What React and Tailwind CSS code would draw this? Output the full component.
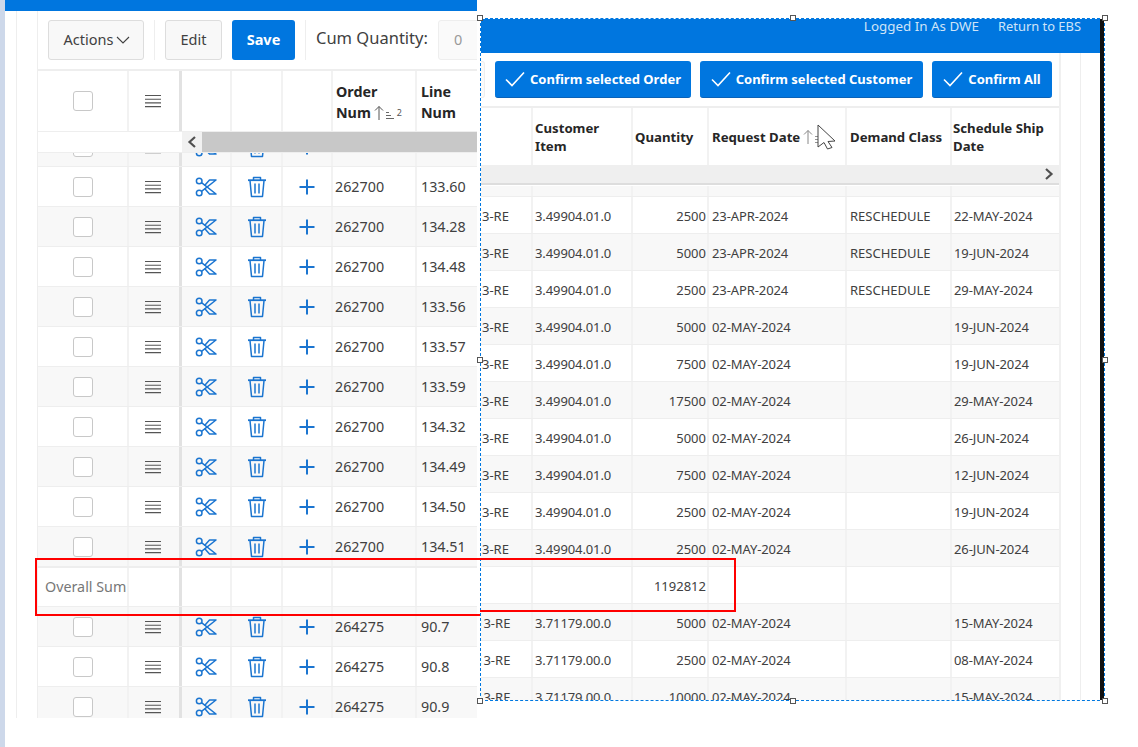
const BLUE = "#1b75d0";

const leftRows = [
  ["", ""],
  ["262700", "133.60"],
  ["262700", "134.28"],
  ["262700", "134.48"],
  ["262700", "133.56"],
  ["262700", "133.57"],
  ["262700", "133.59"],
  ["262700", "134.32"],
  ["262700", "134.49"],
  ["262700", "134.50"],
  ["262700", "134.51"],
  null,
  ["264275", "90.7"],
  ["264275", "90.8"],
  ["264275", "90.9"],
];

const rightRows = [
  { hidden: true },
  { c: "3.49904.01.0", q: "2500", d: "23-APR-2024", k: "RESCHEDULE", s: "22-MAY-2024" },
  { c: "3.49904.01.0", q: "5000", d: "23-APR-2024", k: "RESCHEDULE", s: "19-JUN-2024" },
  { c: "3.49904.01.0", q: "2500", d: "23-APR-2024", k: "RESCHEDULE", s: "29-MAY-2024" },
  { c: "3.49904.01.0", q: "5000", d: "02-MAY-2024", k: "", s: "19-JUN-2024" },
  { c: "3.49904.01.0", q: "7500", d: "02-MAY-2024", k: "", s: "19-JUN-2024" },
  { c: "3.49904.01.0", q: "17500", d: "02-MAY-2024", k: "", s: "29-MAY-2024" },
  { c: "3.49904.01.0", q: "5000", d: "02-MAY-2024", k: "", s: "26-JUN-2024" },
  { c: "3.49904.01.0", q: "7500", d: "02-MAY-2024", k: "", s: "12-JUN-2024" },
  { c: "3.49904.01.0", q: "2500", d: "02-MAY-2024", k: "", s: "19-JUN-2024" },
  { c: "3.49904.01.0", q: "2500", d: "02-MAY-2024", k: "", s: "26-JUN-2024" },
  { sum: "1192812" },
  { c: "3.71179.00.0", q: "5000", d: "02-MAY-2024", k: "", s: "15-MAY-2024", low: true },
  { c: "3.71179.00.0", q: "2500", d: "02-MAY-2024", k: "", s: "08-MAY-2024", low: true },
  { c: "3.71179.00.0", q: "10000", d: "02-MAY-2024", k: "", s: "15-MAY-2024", low: true },
];

function Scissors() {
  return (
    <svg width="22" height="22" viewBox="0 0 22 22" fill="none" stroke={BLUE} strokeWidth="1.5" strokeLinejoin="round">
      <circle cx="4.2" cy="5" r="2.8" />
      <circle cx="4.2" cy="17" r="2.8" />
      <path d="M6.5 6.6 L21 18 L14.5 18 L9.6 12.6" />
      <path d="M6.5 15.4 L21 4 L14.5 4 L9.6 9.4" />
    </svg>
  );
}

function Trash() {
  return (
    <svg width="20" height="22" viewBox="0 0 20 22" fill="none" stroke={BLUE} strokeWidth="1.5" strokeLinejoin="round">
      <path d="M1 4.2 H19" strokeWidth="1.8" />
      <path d="M6.5 4 V1.5 H13.5 V4" />
      <path d="M3 4.5 L4.5 20.5 H15.5 L17 4.5" />
      <path d="M8 7.5 V17.5 M12 7.5 V17.5" />
    </svg>
  );
}

function Plus() {
  return (
    <svg width="18" height="18" viewBox="0 0 18 18" fill="none" stroke={BLUE} strokeWidth="2">
      <path d="M9 1.5 V16.5 M1.5 9 H16.5" />
    </svg>
  );
}

function Burger() {
  return (
    <svg width="16" height="14" viewBox="0 0 16 14" fill="none" stroke="#555555" strokeWidth="1.1">
      <path d="M0 1.5 H16 M0 5.2 H16 M0 8.9 H16 M0 12.6 H16" />
    </svg>
  );
}

function Box() {
  return <span className="block w-5 h-5 rounded-[3px] border border-[#c8c8c8] bg-white" />;
}

function Check() {
  return (
    <svg width="20" height="16" viewBox="0 0 20 16" fill="none" stroke="#ffffff" strokeWidth="1.6">
      <path d="M1 8.5 L7 14.5 L19 1.5" />
    </svg>
  );
}

function SortIcon({ color = "#555555" }) {
  return (
    <svg width="22" height="16" viewBox="0 0 22 16" fill="none" stroke={color} strokeWidth="1">
      <path d="M5 15 V1.5 M1 5.5 L5 1.5 L9 5.5" />
      <path d="M12 7.5 H15 M12 10.5 H17 M12 13.5 H20" strokeWidth="0.9" />
    </svg>
  );
}

function Cursor() {
  return (
    <svg width="19" height="26" viewBox="0 0 19 26" fill="#ffffff" stroke="#444444" strokeWidth="1">
      <path d="M1 1 L18 17 L11 17.5 L15 23.5 L10.5 25 L7 18.5 L1 23 Z" strokeLinejoin="round" />
    </svg>
  );
}

function LeftRow({ row, index }) {
  if (!row) {
    return (
      <div className="grid grid-cols-[91px_53px_50px_51px_50px_84px_60px] h-10 bg-white border-y border-[#eeeeee] text-[14.3px] text-[#777777]">
        <div className="border-r-2 border-[#f2f2f2] pl-[7px] flex items-center whitespace-nowrap">Overall Sum</div>
        <div className="border-r-[3px] border-[#e2e2e2]" />
        <div className="border-r-2 border-[#f2f2f2]" />
        <div className="border-r-2 border-[#f2f2f2]" />
        <div className="border-r-2 border-[#f2f2f2]" />
        <div className="border-r-2 border-[#f2f2f2]" />
        <div />
      </div>
    );
  }
  const bg = index % 2 === 0 ? "bg-[#f8f8f8]" : "bg-white";
  return (
    <div className={`grid grid-cols-[91px_53px_50px_51px_50px_84px_60px] h-10 border-b border-[#eeeeee] text-[14.3px] text-[#404040] ${bg}`}>
      <div className="border-r-2 border-[#f2f2f2] flex items-center justify-center"><Box /></div>
      <div className="border-r-[3px] border-[#e2e2e2] flex items-center justify-center pr-[2px]"><Burger /></div>
      <div className="border-r-2 border-[#f2f2f2] flex items-center justify-center"><Scissors /></div>
      <div className="border-r-2 border-[#f2f2f2] flex items-center justify-center"><Trash /></div>
      <div className="border-r-2 border-[#f2f2f2] flex items-center justify-center"><Plus /></div>
      <div className="border-r-2 border-[#f2f2f2] flex items-center pl-[2px]">{row[0]}</div>
      <div className="flex items-center pl-1">{row[1]}</div>
    </div>
  );
}

function LeftPanel() {
  return (
    <div className="w-[472px] h-[718px] shrink-0 flex flex-col overflow-hidden">
      <div className="h-[11px] bg-[#0076df] shrink-0" />
      <div className="flex-1 min-h-0 flex pl-[11px]">
        <div className="w-[22px] shrink-0 border-l border-[#eeeeee] border-r" />
        <div className="w-[439px] shrink-0 flex flex-col">
          <div className="h-[60px] shrink-0 border-b-2 border-[#eeeeee] flex items-start pt-[9px] pl-[10px] text-[#404040]">
            <button className="w-[96px] shrink-0 h-10 rounded-[3px] border border-[#dddddd] bg-[#f8f8f8] text-[14.5px] flex items-center justify-center gap-[3px] pl-[2px]">
              Actions
              <svg width="14" height="8" viewBox="0 0 14 8" fill="none" stroke="#404040" strokeWidth="1.1"><path d="M1 1 L7 7 L13 1" /></svg>
            </button>
            <div className="w-px shrink-0 h-10 bg-[#eeeeee] mx-[10px]" />
            <button className="w-[57px] shrink-0 h-10 rounded-[3px] border border-[#dddddd] bg-[#f8f8f8] text-[14.5px]">Edit</button>
            <button className="w-[63px] shrink-0 h-10 ml-[10px] rounded-[3px] bg-[#0076df] text-white font-bold text-[14.5px]">Save</button>
            <div className="w-px shrink-0 h-10 bg-[#eeeeee] mx-[10px]" />
            <span className="shrink-0 text-[16.5px] leading-[36px] whitespace-nowrap">Cum Quantity:</span>
            <div className="w-[60px] h-10 ml-[10px] shrink-0 rounded-[3px] border border-[#eeeeee] bg-[#fafafa] text-[#999999] text-[14.5px] flex items-center pl-[15px]">0</div>
          </div>
          <div className="grid grid-cols-[91px_53px_50px_51px_50px_84px_60px] h-[61px] shrink-0 text-[14.3px] leading-[21px] font-bold text-[#262626] border-b border-[#eeeeee]">
            <div className="border-r-2 border-[#f2f2f2] flex items-center justify-center"><Box /></div>
            <div className="border-r-[3px] border-[#e2e2e2] flex items-center justify-center pr-[2px]"><Burger /></div>
            <div className="border-r-2 border-[#f2f2f2]" />
            <div className="border-r-2 border-[#f2f2f2]" />
            <div className="border-r-2 border-[#f2f2f2]" />
            <div className="border-r-2 border-[#f2f2f2] flex flex-col justify-center pl-[3px] pt-[2px]">
              <span>Order</span>
              <span className="flex items-center gap-[3px] whitespace-nowrap">Num <SortIcon /><span className="-ml-[2px] text-[9px] font-normal text-[#555555]">2</span></span>
            </div>
            <div className="flex flex-col justify-center pl-1 pt-[2px]"><span>Line</span><span>Num</span></div>
          </div>
          <div className="h-[21px] shrink-0 flex border-b border-[#eeeeee]">
            <div className="w-[144px] shrink-0 bg-white" />
            <div className="w-5 shrink-0 bg-[#f1f1f1] flex items-center justify-center">
              <svg width="10" height="12" viewBox="0 0 10 12" fill="none" stroke="#505050" strokeWidth="2.2"><path d="M8 1 L2.5 6 L8 11" /></svg>
            </div>
            <div className="flex-1 bg-[#c8c8c8]" />
          </div>
          <div className="flex-1 min-h-0 overflow-hidden">
            <div className="-mt-[26px]">
              {leftRows.map((r, i) => <LeftRow key={i} row={r} index={i} />)}
            </div>
          </div>
        </div>
      </div>
    </div>
  );
}

function RightRow({ r, index }) {
  const bg = r.sum || index % 2 === 1 ? "bg-white" : "bg-[#f8f8f8]";
  return (
    <div className={`grid grid-cols-[52px_100px_76px_138px_105px_107px] h-[37px] border-b border-[#eeeeee] text-[13px] text-[#404040] ${bg}`}>
      <div className="border-r-2 border-[#f2f2f2] flex items-center pt-[3px] overflow-hidden whitespace-nowrap">
        {r.c && (r.low ? <span className="-ml-[5px]">13-RE</span> : <span className="pl-[1px]">3-RE</span>)}
      </div>
      <div className="border-r-2 border-[#f2f2f2] flex items-center pt-[3px] pl-[2px] tracking-[-0.1px]">{r.c}</div>
      <div className="border-r-2 border-[#f2f2f2] flex items-center pt-[3px] justify-end pr-[1px]">{r.q || r.sum}</div>
      <div className="border-r-2 border-[#f2f2f2] flex items-center pt-[3px] pl-[3px] whitespace-nowrap tracking-[-0.1px]">{r.d}</div>
      <div className="border-r-2 border-[#f2f2f2] flex items-center pt-[3px] pl-[3px]">{r.k}</div>
      <div className="flex items-center pt-[3px] pl-[2px] whitespace-nowrap tracking-[-0.1px]">{r.s}</div>
    </div>
  );
}

function ConfirmButton({ label, w }) {
  return (
    <button className={`${w} h-[37px] shrink-0 rounded-[3px] bg-[#0076df] border-b border-[#0a62b8] text-white font-bold text-[13px] flex items-center justify-center gap-[5px] whitespace-nowrap`}>
      <Check /><span className="pt-[2px]">{label}</span>
    </button>
  );
}

function Handle({ pos }) {
  return <span className={`absolute w-[6px] h-[6px] bg-white border border-[#555555] ${pos}`} />;
}

function RightPanel() {
  return (
    <div className="relative ml-[3px] mt-[18px] w-[625px] h-[683px] shrink-0 border border-dashed border-[#0078e0] flex">
      <div className="flex-1 min-w-0 flex flex-col">
        <div className="h-[34px] shrink-0 bg-[#0076df] flex justify-end items-start gap-[19px] pr-[19px] text-[#cfe4f8] leading-[14px]">
          <span className="text-[13.4px]">Logged In As DWE</span>
          <span className="text-[12.9px]">Return to EBS</span>
        </div>
        <div className="flex-1 min-h-0 flex">
          <div className="w-[580px] shrink-0 border-r-2 border-[#f0f0f0] flex flex-col">
            <div className="h-[55px] shrink-0 flex items-start pt-2 border-b-2 border-[#eeeeee]">
              <div className="w-1 h-[37px] shrink-0 rounded-r-[3px] border border-l-0 border-[#eeeeee] bg-[#fafafa]" />
              <div className="ml-[10px] flex gap-[9px]">
                <ConfirmButton label="Confirm selected Order" w="w-[196px]" />
                <ConfirmButton label="Confirm selected Customer" w="w-[223px]" />
                <ConfirmButton label="Confirm All" w="w-[120px]" />
              </div>
            </div>
            <div className="grid grid-cols-[52px_100px_76px_138px_105px_107px] h-[57px] shrink-0 text-[13.2px] leading-[18px] font-bold text-[#262626]">
              <div className="border-r-2 border-[#f2f2f2]" />
              <div className="border-r-2 border-[#f2f2f2] flex flex-col justify-center pl-[2px]"><span>Customer</span><span>Item</span></div>
              <div className="border-r-2 border-[#f2f2f2] flex items-center pl-[2px]">Quantity</div>
              <div className="relative border-r-2 border-[#f2f2f2] flex items-center pl-[3px] whitespace-nowrap gap-[3px]">
                Request Date <SortIcon color="#888888" />
                <span className="absolute left-[108px] top-[16px]"><Cursor /></span>
              </div>
              <div className="border-r-2 border-[#f2f2f2] flex items-center pl-[3px] whitespace-nowrap">Demand Class</div>
              <div className="flex flex-col justify-center pl-[1px] whitespace-nowrap"><span>Schedule Ship</span><span>Date</span></div>
            </div>
            <div className="h-5 mb-px shrink-0 w-[578px] bg-[#efefef] border-b-2 border-[#dddddd] flex items-center justify-end pr-[5px]">
              <svg width="10" height="12" viewBox="0 0 10 12" fill="none" stroke="#505050" strokeWidth="2.2"><path d="M2 1 L7.5 6 L2 11" /></svg>
            </div>
            <div className="flex-1 min-h-0 overflow-hidden w-[578px]">
              <div className="-mt-[26px]">
                {rightRows.map((r, i) => <RightRow key={i} r={r} index={i} />)}
              </div>
            </div>
          </div>
          <div className="w-[20px] shrink-0 border-r border-[#eeeeee]" />
        </div>
      </div>
      <div className="w-1 shrink-0 bg-[#111111]" />
      <Handle pos="-left-[4px] -top-[4px]" />
      <Handle pos="left-[309px] -top-[4px]" />
      <Handle pos="-right-[4px] -top-[4px]" />
      <Handle pos="-left-[4px] top-[338px]" />
      <Handle pos="-right-[4px] top-[338px]" />
      <Handle pos="-left-[4px] -bottom-[4px]" />
      <Handle pos="left-[309px] -bottom-[4px]" />
      <Handle pos="-right-[4px] -bottom-[4px]" />
    </div>
  );
}

export default function App() {
  return (
    <div className="relative w-[1138px] h-[747px] overflow-hidden bg-white flex items-start font-['Noto_Sans',sans-serif]">
      <div className="w-[5px] h-[747px] shrink-0 bg-[#cdd8ea]" />
      <LeftPanel />
      <RightPanel />
      <div className="absolute left-[35px] top-[558px] w-[445px] h-[58px] border-2 border-r-0 border-[#ff0000] pointer-events-none" />
      <div className="absolute left-[480px] top-[558px] w-[256px] h-[54px] border-2 border-l-0 border-[#ff0000] pointer-events-none" />
    </div>
  );
}
